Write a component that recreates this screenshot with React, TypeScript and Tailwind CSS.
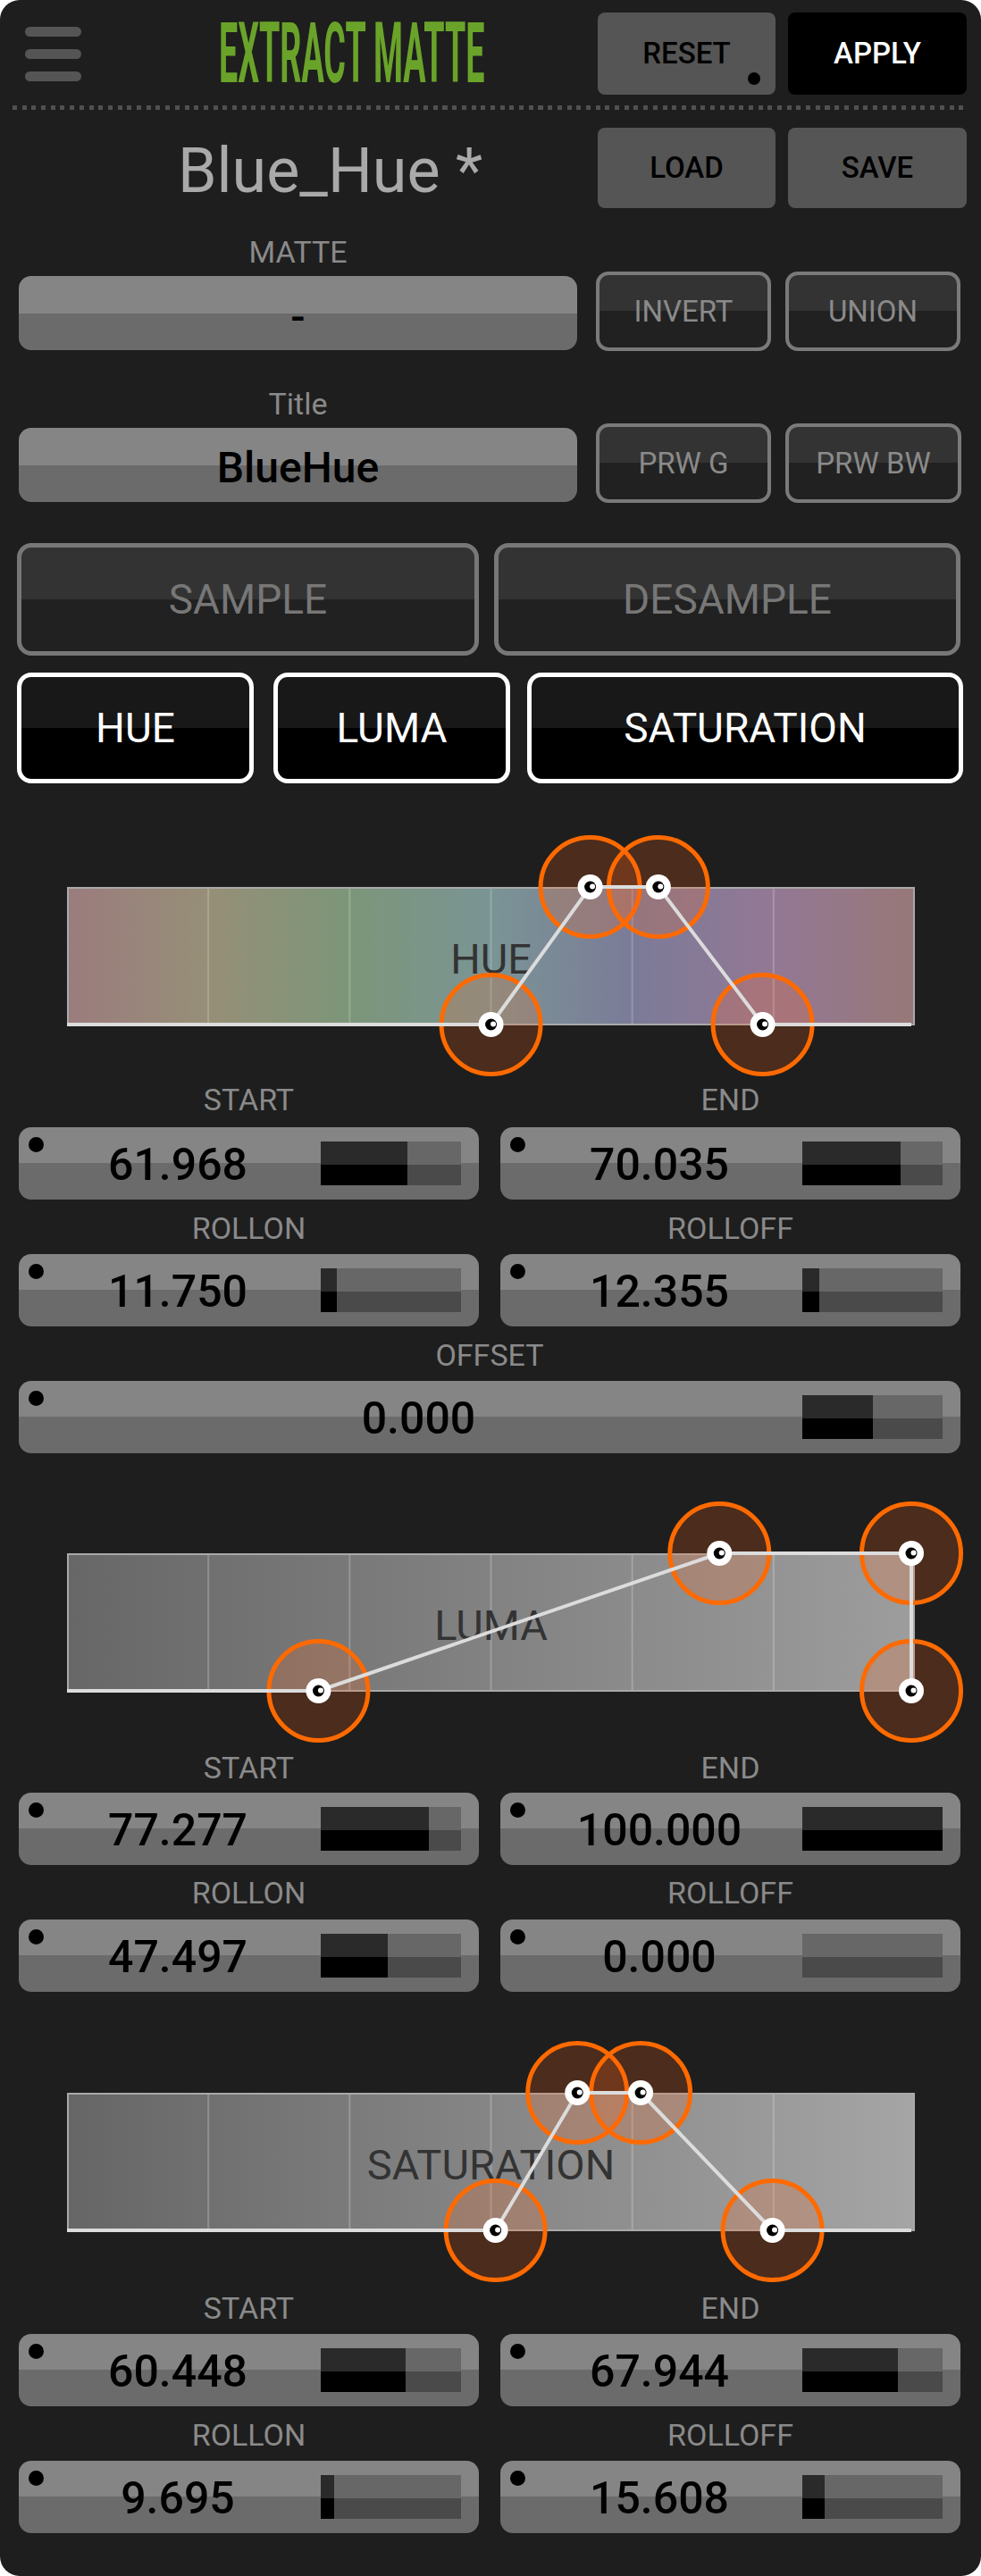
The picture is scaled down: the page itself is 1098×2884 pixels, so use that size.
import React from "react";

const FONT = "font-['Roboto','Liberation_Sans',sans-serif]";

function ValueField({ value, pct }: { value: string; pct: number }) {
  return (
    <div className="relative flex h-[81px] items-center rounded-[14px] bg-[linear-gradient(to_bottom,#858585_0%,#858585_50%,#6b6b6b_50%,#6b6b6b_100%)] pl-[18px] pr-[20px]">
      <span className="absolute left-[11px] top-[11px] h-[17px] w-[17px] rounded-full bg-black" />
      <span className="flex-1 pt-[3px] text-center text-[50px] font-medium leading-none text-black">{value}</span>
      <div className="flex h-[49px] w-[157px] bg-[linear-gradient(to_bottom,#676767_0%,#676767_53%,#4a4a4a_53%,#4a4a4a_100%)]">
        <div
          className="h-full bg-[linear-gradient(to_bottom,#2a2a2a_0%,#2a2a2a_53%,#000_53%,#000_100%)]"
          style={{ width: `${pct}%` }}
        />
      </div>
    </div>
  );
}

function Label({ children }: { children: React.ReactNode }) {
  return <div className="text-center text-[34px] leading-[32px] text-[#8a8a8a]">{children}</div>;
}

type Stop = [string, string];

function Graph({
  id,
  label,
  stops,
  pts,
  divider,
}: {
  id: string;
  label: string;
  stops: Stop[];
  pts: [number, number, number, number];
  divider: string;
}) {
  const X = (v: number) => 75 + v * 9.45;
  const top = 60;
  const bot = 214;
  const [bl, tl, tr, br] = pts.map(X);
  const points: [number, number][] = [
    [bl, bot],
    [tl, top],
    [tr, top],
    [br, bot],
  ];
  const divs = [1, 2, 3, 4, 5].map((k) => 75 + (k * 949) / 6);
  return (
    <svg width="1098" height="280" viewBox="0 0 1098 280" className="block">
      <defs>
        <linearGradient id={id} x1="0" y1="0" x2="1" y2="0">
          {stops.map(([o, c]) => (
            <stop key={o} offset={o} stopColor={c} />
          ))}
        </linearGradient>
      </defs>
      <rect x={76} y={61} width={947} height={153} fill={`url(#${id})`} stroke="#a9a9a9" strokeWidth={2} />
      {divs.map((x) => (
        <line key={x} x1={x} y1={62} x2={x} y2={213} stroke={divider} strokeWidth={2} />
      ))}
      <text
        x={549.5}
        y={157}
        textAnchor="middle"
        fontSize={47}
        fill="#333333"
        fontFamily="Roboto, 'Liberation Sans', sans-serif"
      >
        {label}
      </text>
      {points.map(([x, y], i) => (
        <circle key={i} cx={x} cy={y} r={55.5} fill="rgba(255,102,25,0.2)" stroke="#ff6a00" strokeWidth={5} />
      ))}
      <polyline
        points={`75,${bot} ${bl},${bot} ${tl},${top} ${tr},${top} ${br},${bot} 1020,${bot}`}
        fill="none"
        stroke="#dcdcdc"
        strokeWidth={4}
        strokeLinejoin="round"
      />
      {points.map(([x, y], i) => (
        <g key={i}>
          <circle cx={x} cy={y} r={14} fill="#ffffff" />
          <circle cx={x} cy={y} r={6.5} fill="#000000" />
          <circle cx={x + 2.5} cy={y - 0.5} r={3} fill="#ffffff" />
        </g>
      ))}
    </svg>
  );
}

const grayBtnBg =
  "bg-[linear-gradient(to_bottom,#333333_0%,#333333_50%,#212121_50%,#212121_100%)]";

export default function App() {
  return (
    <div className={`w-[1098px] bg-white ${FONT}`}>
      <div className="flex h-[2884px] flex-col rounded-[22px] bg-[#1e1e1e]">
        {/* header */}
        <div className="flex h-[106px] pt-[14px] pl-[28px]">
          <div className="flex h-[92px] w-[63px] flex-col justify-center gap-[14px]">
            <span className="h-[11px] w-full rounded-full bg-[#555555]" />
            <span className="h-[11px] w-full rounded-full bg-[#555555]" />
            <span className="h-[11px] w-full rounded-full bg-[#555555]" />
          </div>
          <div className="flex h-[92px] w-[564px] items-center justify-center pl-[42px]">
            <span className="inline-block h-[92px] scale-x-[0.4] whitespace-nowrap text-[94px] font-bold leading-[92px] text-[#6aa32a]">
              EXTRACT MATTE
            </span>
          </div>
          <div className="ml-[14px] flex h-[92px] gap-[14px]">
            <div className="relative flex h-[92px] w-[199px] items-center justify-center rounded-[8px] bg-[#555555] text-[33px] font-medium text-black">
              RESET
              <span className="absolute bottom-[11px] right-[17px] h-[14px] w-[14px] rounded-full bg-black" />
            </div>
            <div className="flex h-[92px] w-[200px] items-center justify-center rounded-[8px] bg-black text-[33px] font-medium text-white">
              APPLY
            </div>
          </div>
        </div>

        {/* dotted separator */}
        <div className="mx-[14px] mt-[12px] h-[5px] bg-[repeating-linear-gradient(to_right,#505050_0px,#505050_5px,transparent_5px,transparent_10.7px)]" />

        {/* name row */}
        <div className="mt-[20px] flex h-[90px] pl-[28px]">
          <div className="flex h-[90px] w-[627px] items-center justify-center pl-[56px] pt-[6px] text-[70px] leading-none text-[#a9a9a9]">
            Blue_Hue *
          </div>
          <div className="ml-[14px] flex gap-[14px]">
            <div className="flex h-[90px] w-[199px] items-center justify-center rounded-[8px] bg-[#555555] text-[33px] font-medium text-black">
              LOAD
            </div>
            <div className="flex h-[90px] w-[200px] items-center justify-center rounded-[8px] bg-[#555555] text-[33px] font-medium text-black">
              SAVE
            </div>
          </div>
        </div>

        {/* matte row */}
        <div className="mt-[33px] flex items-end pl-[21px]">
          <div className="w-[625px] pb-[1px]">
            <Label>MATTE</Label>
            <div className="mt-[11px] flex h-[83px] items-center justify-center rounded-[14px] bg-[linear-gradient(to_bottom,#858585_0%,#858585_50%,#6b6b6b_50%,#6b6b6b_100%)] pt-[8px] text-[48px] font-medium leading-none text-black">
              -
            </div>
          </div>
          <div className={`ml-[21px] flex h-[89px] w-[196px] items-center justify-center rounded-[14px] border-[4px] border-[#7a7a7a] ${grayBtnBg} text-[33px] text-[#8a8a8a]`}>
            INVERT
          </div>
          <div className={`ml-[16px] flex h-[89px] w-[196px] items-center justify-center rounded-[14px] border-[4px] border-[#7a7a7a] ${grayBtnBg} text-[33px] text-[#8a8a8a]`}>
            UNION
          </div>
        </div>

        {/* title row */}
        <div className="mt-[43px] flex items-end pl-[21px]">
          <div className="w-[625px] pb-[1px]">
            <Label>Title</Label>
            <div className="mt-[11px] flex h-[83px] items-center justify-center rounded-[14px] bg-[linear-gradient(to_bottom,#858585_0%,#858585_50%,#6b6b6b_50%,#6b6b6b_100%)] pt-[6px] text-[48px] font-medium leading-none text-black">
              BlueHue
            </div>
          </div>
          <div className={`ml-[21px] flex h-[89px] w-[196px] items-center justify-center rounded-[14px] border-[4px] border-[#7a7a7a] ${grayBtnBg} text-[33px] text-[#8a8a8a]`}>
            PRW G
          </div>
          <div className={`ml-[16px] flex h-[89px] w-[197px] items-center justify-center rounded-[14px] border-[4px] border-[#7a7a7a] ${grayBtnBg} text-[33px] text-[#8a8a8a]`}>
            PRW BW
          </div>
        </div>

        {/* sample row */}
        <div className="mt-[45px] flex pl-[19px]">
          <div className={`flex h-[126px] w-[517px] items-center justify-center rounded-[16px] border-[5px] border-[#777777] ${grayBtnBg} text-[46px] text-[#777777]`}>
            SAMPLE
          </div>
          <div className={`ml-[17px] flex h-[126px] w-[522px] items-center justify-center rounded-[16px] border-[5px] border-[#777777] ${grayBtnBg} text-[46px] text-[#777777]`}>
            DESAMPLE
          </div>
        </div>

        {/* mode row */}
        <div className="mt-[19px] flex pl-[19px]">
          <div className="flex h-[124px] w-[265px] items-center justify-center rounded-[16px] border-[5px] border-white bg-[linear-gradient(to_bottom,#181818_0%,#181818_50%,#000_50%,#000_100%)] text-[46px] text-white">
            HUE
          </div>
          <div className="ml-[22px] flex h-[124px] w-[265px] items-center justify-center rounded-[16px] border-[5px] border-white bg-[linear-gradient(to_bottom,#181818_0%,#181818_50%,#000_50%,#000_100%)] text-[46px] text-white">
            LUMA
          </div>
          <div className="ml-[19px] flex h-[124px] w-[488px] items-center justify-center rounded-[16px] border-[5px] border-white bg-[linear-gradient(to_bottom,#181818_0%,#181818_50%,#000_50%,#000_100%)] text-[46px] text-white">
            SATURATION
          </div>
        </div>

        {/* HUE graph */}
        <div className="mt-[56px]">
          <Graph
            id="hueGrad"
            label="HUE"
            divider="rgba(255,255,255,0.2)"
            stops={[
              ["0", "#9b7c7e"],
              ["0.17", "#968f77"],
              ["0.33", "#7c9679"],
              ["0.5", "#7a9495"],
              ["0.67", "#7b7b98"],
              ["0.83", "#937895"],
              ["1", "#977878"],
            ]}
            pts={[50.218, 61.968, 70.035, 82.39]}
          />
        </div>
        <div className="ml-[21px] w-[1054px]">
          <div className="mt-[2px] grid grid-cols-2 gap-x-[24px]">
            <div>
              <Label>START</Label>
              <div className="mt-[15px]">
                <ValueField value="61.968" pct={61.968} />
              </div>
            </div>
            <div>
              <Label>END</Label>
              <div className="mt-[15px]">
                <ValueField value="70.035" pct={70.035} />
              </div>
            </div>
            <div className="mt-[16px]">
              <Label>ROLLON</Label>
              <div className="mt-[13px]">
                <ValueField value="11.750" pct={11.75} />
              </div>
            </div>
            <div className="mt-[16px]">
              <Label>ROLLOFF</Label>
              <div className="mt-[13px]">
                <ValueField value="12.355" pct={12.355} />
              </div>
            </div>
          </div>
          <div className="mt-[16px]">
            <Label>OFFSET</Label>
            <div className="mt-[13px]">
              <ValueField value="0.000" pct={50} />
            </div>
          </div>
        </div>

        {/* LUMA graph */}
        <div className="mt-[52px]">
          <Graph
            id="lumaGrad"
            label="LUMA"
            divider="rgba(255,255,255,0.22)"
            stops={[
              ["0", "#676767"],
              ["1", "#9d9d9d"],
            ]}
            pts={[29.78, 77.277, 100, 100]}
          />
        </div>
        <div className="ml-[21px] w-[1054px]">
          <div className="mt-[4px] grid grid-cols-2 gap-x-[24px]">
            <div>
              <Label>START</Label>
              <div className="mt-[12px]">
                <ValueField value="77.277" pct={77.277} />
              </div>
            </div>
            <div>
              <Label>END</Label>
              <div className="mt-[12px]">
                <ValueField value="100.000" pct={100} />
              </div>
            </div>
            <div className="mt-[15px]">
              <Label>ROLLON</Label>
              <div className="mt-[14px]">
                <ValueField value="47.497" pct={47.497} />
              </div>
            </div>
            <div className="mt-[15px]">
              <Label>ROLLOFF</Label>
              <div className="mt-[14px]">
                <ValueField value="0.000" pct={0} />
              </div>
            </div>
          </div>
        </div>

        {/* SATURATION graph */}
        <div className="mt-[53px]">
          <Graph
            id="satGrad"
            label="SATURATION"
            divider="rgba(255,255,255,0.22)"
            stops={[
              ["0", "#666666"],
              ["1", "#a5a5a5"],
            ]}
            pts={[50.753, 60.448, 67.944, 83.552]}
          />
        </div>
        <div className="ml-[21px] w-[1054px]">
          <div className="mt-[5px] grid grid-cols-2 gap-x-[24px]">
            <div>
              <Label>START</Label>
              <div className="mt-[13px]">
                <ValueField value="60.448" pct={60.448} />
              </div>
            </div>
            <div>
              <Label>END</Label>
              <div className="mt-[13px]">
                <ValueField value="67.944" pct={67.944} />
              </div>
            </div>
            <div className="mt-[16px]">
              <Label>ROLLON</Label>
              <div className="mt-[13px]">
                <ValueField value="9.695" pct={9.695} />
              </div>
            </div>
            <div className="mt-[16px]">
              <Label>ROLLOFF</Label>
              <div className="mt-[13px]">
                <ValueField value="15.608" pct={15.608} />
              </div>
            </div>
          </div>
        </div>
      </div>
    </div>
  );
}
